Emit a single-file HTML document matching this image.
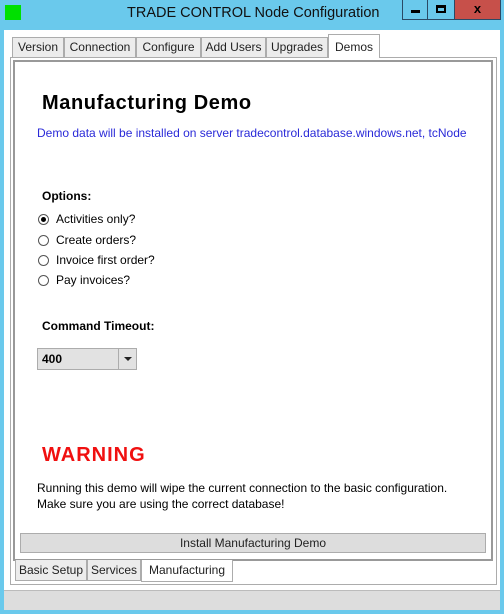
<!DOCTYPE html>
<html><head><style>
*{margin:0;padding:0;box-sizing:border-box}
body{width:504px;height:614px;background:#6ac9ec;font-family:"Liberation Sans",sans-serif;position:relative;overflow:hidden;font-size:12px;color:#000}
.a{position:absolute}
.tab{position:absolute;top:37px;height:20px;background:#ececec;border:1px solid #acacac;border-bottom:none;font-size:12px;line-height:18px;text-align:center;color:#222}
.btab{position:absolute;top:560px;height:21px;background:#ececec;border:1px solid #acacac;border-top:none;font-size:12px;line-height:20px;text-align:center;color:#222}
.r{position:absolute;left:38px;width:11px;height:11px;border:1px solid #555;border-radius:50%;background:#fff}
.rl{position:absolute;left:56px;font-size:12px}
</style></head><body>
<div class="a" style="left:5px;top:5px;width:16px;height:15px;background:#00e000"></div>
<div class="a" style="left:127px;top:5px;font-size:14.5px;color:#111">TRADE CONTROL Node Configuration</div>
<div class="a" style="left:402px;top:0;width:26px;height:20px;border:1px solid #2a4a66;border-top:none;background:#6ac9ec"><div class="a" style="left:8px;top:10px;width:9px;height:3px;background:#000"></div></div>
<div class="a" style="left:428px;top:0;width:27px;height:20px;border:1px solid #2a4a66;border-left:none;border-top:none"><div class="a" style="left:8px;top:5px;width:10px;height:8px;border:2px solid #000;border-top-width:3px"></div></div>
<div class="a" style="left:455px;top:0;width:46px;height:20px;background:#c7504a;border:1px solid #2a4a66;border-left:none;border-top:none;font-weight:bold;font-size:13px;text-align:center;line-height:18px">x</div>
<div class="a" style="left:4px;top:30px;width:496px;height:580px;background:#fff"></div>
<div class="tab" style="left:12px;width:52px">Version</div>
<div class="tab" style="left:64px;width:72px">Connection</div>
<div class="tab" style="left:136px;width:65px">Configure</div>
<div class="tab" style="left:201px;width:65px">Add Users</div>
<div class="tab" style="left:266px;width:62px">Upgrades</div>
<div class="a" style="left:10px;top:57px;width:487px;height:528px;border:1px solid #acacac"></div>
<div class="tab" style="left:328px;top:34px;width:52px;height:24px;background:#fff;line-height:24px">Demos</div>
<div class="a" style="left:13px;top:60px;width:480px;height:501px;border:2px solid #999"></div>
<div class="a" style="left:42px;top:92px;font-size:20px;font-weight:bold;letter-spacing:0.6px">Manufacturing Demo</div>
<div class="a" style="left:37px;top:126px;font-size:12px;color:#2a2ad8">Demo data will be installed on server tradecontrol.database.windows.net, tcNode</div>
<div class="a" style="left:42px;top:189px;font-size:12px;font-weight:bold">Options:</div>
<div class="r" style="top:214px"><div class="a" style="left:2px;top:2px;width:5px;height:5px;border-radius:50%;background:#000"></div></div><div class="rl" style="top:212px">Activities only?</div>
<div class="r" style="top:235px"></div><div class="rl" style="top:233px">Create orders?</div>
<div class="r" style="top:255px"></div><div class="rl" style="top:253px">Invoice first order?</div>
<div class="r" style="top:275px"></div><div class="rl" style="top:273px">Pay invoices?</div>
<div class="a" style="left:42px;top:319px;font-size:12px;font-weight:bold">Command Timeout:</div>
<div class="a" style="left:37px;top:348px;width:100px;height:22px;background:#e2e2e2;border:1px solid #acacac"><div class="a" style="left:4px;top:3px;font-weight:bold;font-size:12px">400</div><div class="a" style="left:80px;top:0;width:1px;height:20px;background:#acacac"></div><div class="a" style="left:86px;top:8px;width:0;height:0;border-left:4px solid transparent;border-right:4px solid transparent;border-top:4px solid #222"></div></div>
<div class="a" style="left:42px;top:444px;font-size:20px;font-weight:bold;color:#f01010;letter-spacing:1px">WARNING</div>
<div class="a" style="left:37px;top:480px;font-size:12px;line-height:16px">Running this demo will wipe the current connection to the basic configuration.<br>Make sure you are using the correct database!</div>
<div class="a" style="left:20px;top:533px;width:466px;height:20px;background:#dddddd;border:1px solid #acacac;text-align:center;line-height:18px;font-size:12px;color:#222">Install Manufacturing Demo</div>
<div class="btab" style="left:15px;width:72px">Basic Setup</div>
<div class="btab" style="left:87px;width:54px">Services</div>
<div class="btab" style="left:141px;width:92px;background:#fff;height:22px">Manufacturing</div>
<div class="a" style="left:4px;top:590px;width:496px;height:20px;background:#dddddd;border-top:1px solid #bbb"></div>
</body></html>
